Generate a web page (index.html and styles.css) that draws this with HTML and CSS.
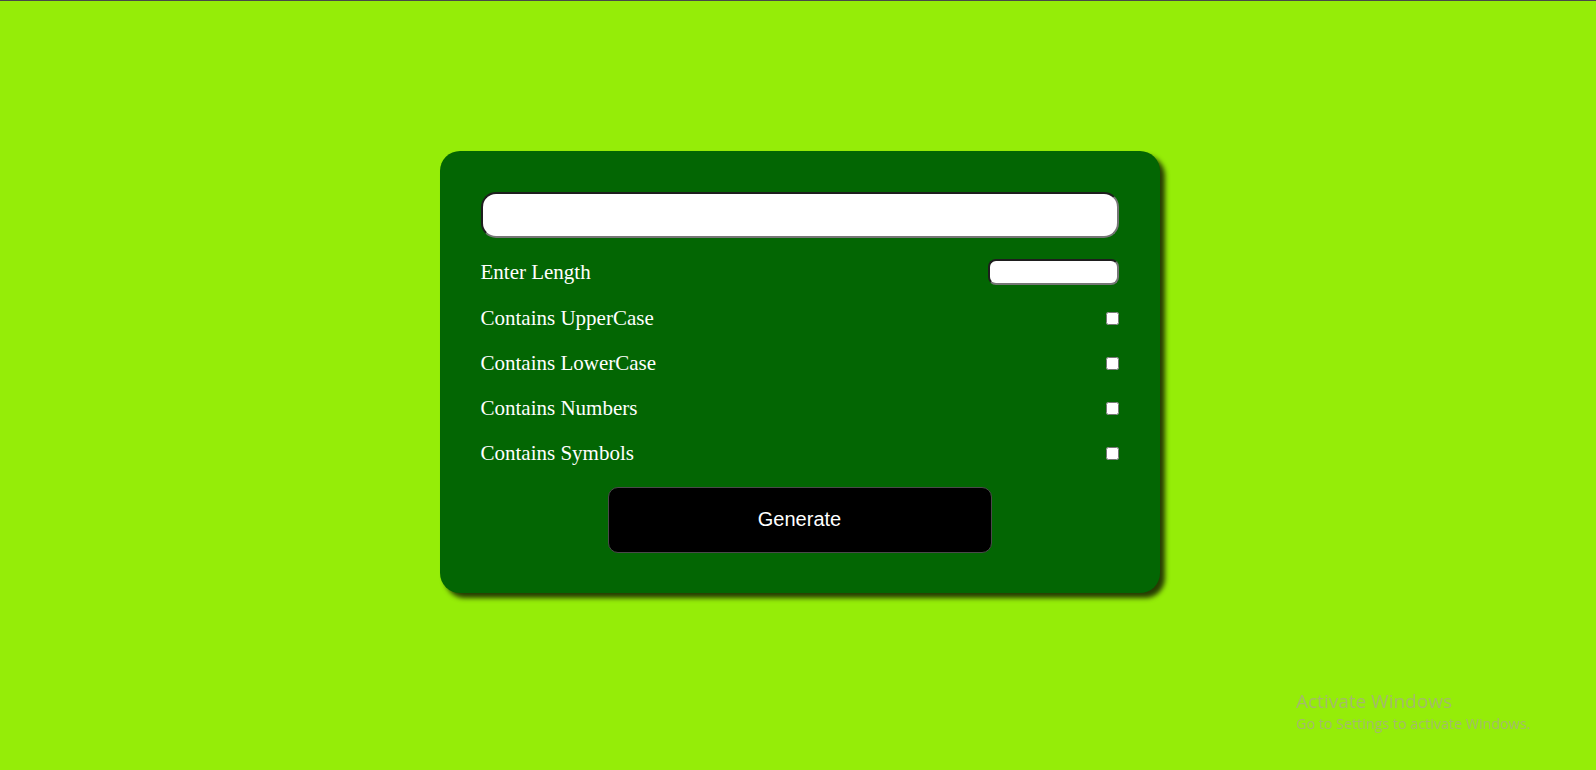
FILE: index.html
```html
<!DOCTYPE html>
<html lang="en">
<head>
<meta charset="utf-8">
<title>Password Generator</title>
<link rel="stylesheet" href="styles.css">
</head>
<body>
<div class="topline"></div>
<main class="card">
  <input class="output" type="text" readonly>
  <div class="row">
    <label for="len">Enter Length</label>
    <input id="len" class="len" type="number">
  </div>
  <div class="row">
    <label for="up">Contains UpperCase</label>
    <input id="up" class="check" type="checkbox">
  </div>
  <div class="row">
    <label for="low">Contains LowerCase</label>
    <input id="low" class="check" type="checkbox">
  </div>
  <div class="row">
    <label for="num">Contains Numbers</label>
    <input id="num" class="check" type="checkbox">
  </div>
  <div class="row">
    <label for="sym">Contains Symbols</label>
    <input id="sym" class="check" type="checkbox">
  </div>
  <button class="generate" type="button">Generate</button>
</main>
<div class="watermark">
  <div class="wm-title">Activate Windows</div>
  <div class="wm-sub">Go to Settings to activate Windows.</div>
</div>
</body>
</html>
```
FILE: styles.css
```css
html, body {
  margin: 0;
  padding: 0;
}
body {
  background: #95ed08;
  height: 770px;
  overflow: hidden;
  padding-left: 3px;
  box-sizing: border-box;
  font-family: "Liberation Serif", "Times New Roman", serif;
}
.topline {
  height: 1px;
  margin-left: -3px;
  background: #4a4a4a;
}
.card {
  box-sizing: border-box;
  width: 720px;
  margin: 150px auto 0;
  padding: 41px 41px 40px;
  background: #036603;
  border-radius: 20px;
  box-shadow: 5px 5px 5px rgba(0, 0, 0, 0.75);
  display: flex;
  flex-direction: column;
  gap: 21px;
}
.output {
  box-sizing: border-box;
  height: 46px;
  width: 100%;
  margin: 0;
  background: #fff;
  border-width: 2px;
  border-style: solid;
  border-color: #1e1e1e #767676 #767676 #1e1e1e;
  border-radius: 15px;
  outline: none;
}
.row {
  display: flex;
  justify-content: space-between;
  align-items: center;
  min-height: 24px;
  color: #fff;
  font-size: 21px;
  line-height: 24px;
}
.len {
  box-sizing: border-box;
  width: 131px;
  height: 26px;
  margin: 0;
  background: #fff;
  border-width: 2px;
  border-style: solid;
  border-color: #1e1e1e #767676 #767676 #1e1e1e;
  border-radius: 8px;
  outline: none;
}
.check {
  width: 13px;
  height: 13px;
  margin: 0;
}
.generate {
  align-self: center;
  width: 384px;
  height: 66px;
  margin-top: 1px;
  padding: 0 0 2px;
  background: #000;
  color: #fff;
  border: 1px solid #4a4a4a;
  border-radius: 10px;
  font-family: "Liberation Sans", Arial, sans-serif;
  font-size: 20px;
}
.watermark {
  position: fixed;
  left: 1296px;
  top: 689px;
  color: #a3b96c;
  font-family: "Open Sans", "Noto Sans", sans-serif;
}
.wm-title {
  font-size: 19px;
  line-height: 25px;
}
.wm-sub {
  font-size: 14.3px;
  line-height: 20px;
}
```
